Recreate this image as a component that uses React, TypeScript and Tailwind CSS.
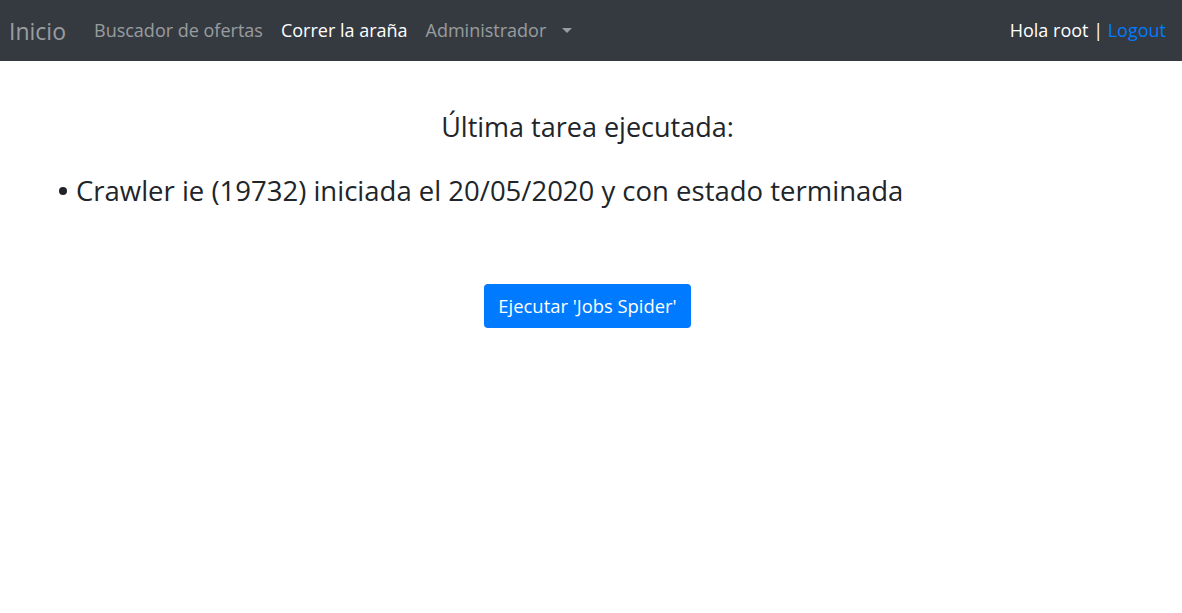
export default function App() {
  return (
    <div className="min-h-screen bg-white text-[#212529]" style={{ fontFamily: '"Open Sans", "Noto Sans", sans-serif' }}>
      <nav className="flex h-[61px] items-center justify-between bg-[#343a40] pl-[9px] pr-[16px]">
        <div className="flex items-center">
          <a className="mr-[28px] text-[23px] leading-[34px] text-white/50">Inicio</a>
          <ul className="flex items-center gap-[18px] text-[18px]">
            <li className="text-white/50">Buscador de ofertas</li>
            <li className="text-white">Correr la araña</li>
            <li className="flex items-center text-white/50">
              Administrador
              <span className="ml-[16px] inline-block h-0 w-0 border-x-[5px] border-t-[5px] border-x-transparent border-t-white/50" />
            </li>
          </ul>
        </div>
        <div className="text-[18px] text-white">
          Hola root | <a className="text-[#007bff]">Logout</a>
        </div>
      </nav>

      <main className="mx-auto max-w-[1140px] pl-[15px] pr-[22px]">
        <h4 className="mt-[46px] text-center text-[27px] leading-[40px]">Última tarea ejecutada:</h4>
        <ul className="mt-[22px] pl-[40px] text-[27.5px] leading-[44px]">
          <li className="flex items-center">
            <span className="-ml-[17px] mr-[9px] h-[8px] w-[8px] shrink-0 rounded-full bg-[#212529]" />
            Crawler ie (19732) iniciada el 20/05/2020 y con estado terminada
          </li>
        </ul>
        <div className="mt-[71px] flex justify-center">
          <button className="h-[44px] rounded-[4px] bg-[#007bff] px-[14px] text-[18.4px] text-white">
            Ejecutar 'Jobs Spider'
          </button>
        </div>
      </main>
    </div>
  );
}
